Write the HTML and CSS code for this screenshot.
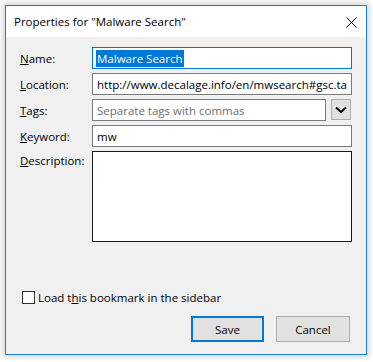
FILE: index.html
```html
<!DOCTYPE html>
<html>
<head>
<meta charset="utf-8">
<link rel="stylesheet" href="styles.css">
</head>
<body>
<div class="window">
  <div class="titlebar">
    <span class="title">Properties for "Malware Search"</span>
    <svg class="close" width="11" height="11" viewBox="0 0 11 11"><path d="M0.5 0.5 L10.5 10.5 M10.5 0.5 L0.5 10.5" stroke="#000" stroke-width="1" fill="none"/></svg>
  </div>
  <div class="content">
    <div class="form">
      <label class="lbl"><u>N</u>ame:</label>
      <div class="field focused"><span class="sel">Malware Search</span></div>
      <label class="lbl"><u>L</u>ocation:</label>
      <div class="field"><span class="val">http://www.decalage.info/en/mwsearch#gsc.ta</span></div>
      <label class="lbl"><u>T</u>ags:</label>
      <div class="tagrow">
        <div class="field grow"><span class="ph">Separate tags with commas</span></div>
        <div class="drop"><svg width="12" height="8" viewBox="0 0 12 8"><path d="M1 1.5 L6 6 L11 1.5" stroke="#000" stroke-width="2" fill="none"/></svg></div>
      </div>
      <label class="lbl"><u>K</u>eyword:</label>
      <div class="field"><span class="val">mw</span></div>
      <label class="lbl top"><u>D</u>escription:</label>
      <div class="field desc"></div>
    </div>
    <div class="check">
      <span class="box"></span>
      <span class="cl">Load t<u>h</u>is bookmark in the sidebar</span>
    </div>
    <div class="buttons">
      <div class="btn default">Save</div>
      <div class="btn">Cancel</div>
    </div>
  </div>
</div>
</body>
</html>
```

FILE: styles.css
```css
html, body {
  margin: 0;
  padding: 0;
  background: #ffffff;
}
body {
  font-family: "Open Sans", "Noto Sans", sans-serif;
  font-size: 11.5px;
  color: #000;
}
.window {
  margin: 5px;
  width: 362px;
  height: 350px;
  box-sizing: border-box;
  border: 1px solid #1883d7;
  background: #f0f0f0;
  box-shadow: 0 0 6px 2px rgba(0,0,0,0.18);
  display: flex;
  flex-direction: column;
}
.titlebar {
  height: 31px;
  background: #ffffff;
  display: flex;
  align-items: center;
  padding-left: 8px;
  padding-right: 9px;
  flex: none;
}
.title {
  flex: 1;
  font-size: 11.5px;
  padding-bottom: 1px;
}
.close {
  display: block;
  margin-top: 1px;
}
.content {
  padding: 10px 14px 0 14px;
  display: flex;
  flex-direction: column;
}
.form {
  display: grid;
  grid-template-columns: 72px 260px;
  row-gap: 4px;
}
.lbl {
  display: flex;
  align-items: center;
  height: 22px;
}
.lbl.top {
  align-items: flex-start;
  height: auto;
  padding-top: 2px;
}
.field {
  height: 22px;
  box-sizing: border-box;
  border: 1px solid #7a7a7a;
  background: #fff;
  display: flex;
  align-items: center;
  padding-left: 4px;
  overflow: hidden;
  white-space: nowrap;
}
.field.focused {
  border-color: #0078d7;
  padding-left: 3px;
}
.sel {
  background: #0078d7;
  color: #fff;
  padding: 1px 1px;
}
.ph {
  color: #6d6d6d;
}
.tagrow {
  display: flex;
  gap: 5px;
}
.grow {
  flex: 1;
}
.drop {
  width: 20px;
  height: 21px;
  box-sizing: border-box;
  border: 1px solid #adadad;
  background: #e1e1e1;
  display: flex;
  align-items: center;
  justify-content: center;
  margin-right: 1px;
}
.drop svg {
  display: block;
  margin-top: 1px;
}
.field.desc {
  height: 91px;
  border-color: #1a1a1a;
}
.check {
  margin-top: 49px;
  margin-left: 2px;
  display: flex;
  align-items: center;
  gap: 3px;
  height: 13px;
}
.box {
  width: 13px;
  height: 13px;
  box-sizing: border-box;
  border: 1px solid #333;
  background: #fff;
}
.cl {
  line-height: 13px;
}
.buttons {
  margin-top: 12px;
  display: flex;
  justify-content: flex-end;
  gap: 12px;
  padding-right: 2px;
}
.btn {
  width: 74px;
  height: 26px;
  box-sizing: border-box;
  border: 1px solid #adadad;
  background: #e1e1e1;
  display: flex;
  align-items: center;
  justify-content: center;
}
.btn.default {
  width: 73px;
  border: 2px solid #0078d7;
}
```
